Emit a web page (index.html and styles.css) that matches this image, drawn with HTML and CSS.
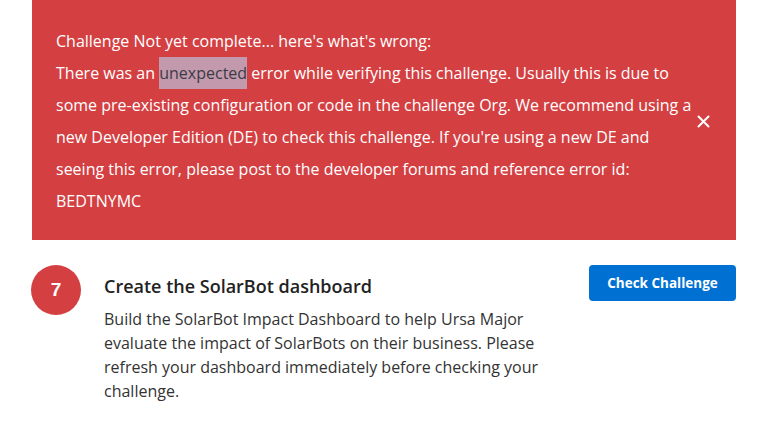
FILE: index.html
```html
<!DOCTYPE html>
<html lang="en">
<head>
<meta charset="utf-8">
<title>Challenge</title>
<link rel="stylesheet" href="styles.css">
</head>
<body>
<div class="page">
  <div class="alert">
    <div class="alert-text">
      <p>Challenge Not yet complete... here's what's wrong:</p>
      <p>There was an <span class="hl">unexpected</span> error while verifying this challenge. Usually this is due to some pre-existing configuration or code in the challenge Org. We recommend using a new Developer Edition (DE) to check this challenge. If you're using a new DE and seeing this error, please post to the developer forums and reference error id: BEDTNYMC</p>
    </div>
    <button class="close" aria-label="Close">
      <svg width="13" height="13" viewBox="0 0 13 13"><path d="M1.5 1.5 L11.5 11.5 M11.5 1.5 L1.5 11.5" stroke="#fff" stroke-width="2" stroke-linecap="round"/></svg>
    </button>
  </div>
  <div class="step">
    <div class="num">7</div>
    <div class="step-body">
      <h2 class="step-title">Create the SolarBot dashboard</h2>
      <p class="step-desc">Build the SolarBot Impact Dashboard to help Ursa Major evaluate the impact of SolarBots on their business. Please refresh your dashboard immediately before checking your challenge.</p>
    </div>
    <button class="check">Check Challenge</button>
  </div>
</div>
</body>
</html>
```
FILE: styles.css
```css
html, body { margin: 0; padding: 0; background: #fff; }
body { font-family: "Open Sans", "Noto Sans", sans-serif; }
.page { padding: 0 25px 0 32px; }
.alert {
  background: #d43f42;
  color: #fff;
  display: flex;
  align-items: center;
  padding: 25px 24px 23px 24px;
  height: 240px;
  box-sizing: border-box;
}
.alert-text { width: 640px; font-size: 16px; line-height: 32px; }
.alert-text p { margin: 0; }
.hl { background: #c39aad; color: #3b3b45; padding: 5px 0; }
.close {
  background: none; border: 0; padding: 0;
  width: 14px; height: 14px; display: flex; align-items: center; justify-content: center;
  margin-left: auto; margin-right: 2px;
}
.step { display: flex; align-items: flex-start; margin-top: 25px; margin-left: -1px; }
.num {
  width: 50px; height: 50px; border-radius: 50%;
  background: #d43f42; color: #fff;
  font-family: "Liberation Sans", Arial, sans-serif; font-weight: 700; font-size: 19px;
  display: flex; align-items: center; justify-content: center;
  flex: none;
}
.step-body { margin-left: 23px; width: 445px; }
.step-title { margin: 9px 0 0 0; font-size: 18px; font-weight: 600; color: #222; line-height: 24px; }
.step-desc { margin: 9px 0 0 0; font-size: 16px; line-height: 24px; color: #333; }
.check {
  margin-left: auto;
  background: #0070d2; color: #fff; border: 0; border-radius: 4px;
  font-family: "Open Sans", sans-serif; font-weight: 700; font-size: 13.5px;
  width: 147px; height: 36px; cursor: pointer;
}
```
